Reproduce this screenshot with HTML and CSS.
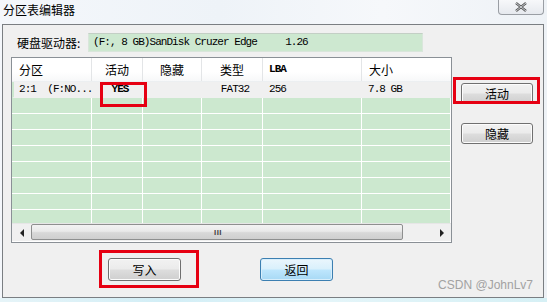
FILE: index.html
```html
<!DOCTYPE html>
<html lang="zh-CN">

<head>
    <meta charset="UTF-8">
    <title>分区表编辑器</title>
    <link rel="stylesheet" href="styles.css">
</head>

<body>

    <div class="titlebar">
        <span class="title">分区表编辑器</span>
        <div class="close">
            <svg width="14" height="10" viewBox="0 0 14 10">
                <path d="M2 1 L12 9 M12 1 L2 9" stroke="#555" stroke-width="2.4" fill="none" />
                <path d="M2 1 L12 9 M12 1 L2 9" stroke="#e9edf2" stroke-width="0.8" fill="none" />
            </svg>
        </div>
    </div>

    <div class="window">
        <div class="drive-row">
            <span class="drive-label">硬盘驱动器:</span>
            <div class="drive-box">(F:, 8 GB)SanDisk Cruzer Edge     1.26</div>
        </div>

        <div class="main">
            <div class="grid">
                <div class="grid-head">
                    <div class="hcell">分区</div>
                    <div class="hcell center">活动</div>
                    <div class="hcell center">隐藏</div>
                    <div class="hcell center">类型</div>
                    <div class="hcell mono">LBA</div>
                    <div class="hcell">大小</div>
                </div>
                <div class="grid-body">
                    <div class="row sel">
                        <div class="cell mono first">2:1  (F:NO...</div>
                        <div class="cell mono center bold">YES</div>
                        <div class="cell"></div>
                        <div class="cell mono center">FAT32</div>
                        <div class="cell mono">256</div>
                        <div class="cell mono">7.8 GB</div>
                    </div>
                    <div class="row"><div class="cell"></div><div class="cell"></div><div class="cell"></div><div class="cell"></div><div class="cell"></div><div class="cell"></div></div>
                    <div class="row"><div class="cell"></div><div class="cell"></div><div class="cell"></div><div class="cell"></div><div class="cell"></div><div class="cell"></div></div>
                    <div class="row"><div class="cell"></div><div class="cell"></div><div class="cell"></div><div class="cell"></div><div class="cell"></div><div class="cell"></div></div>
                    <div class="row"><div class="cell"></div><div class="cell"></div><div class="cell"></div><div class="cell"></div><div class="cell"></div><div class="cell"></div></div>
                    <div class="row"><div class="cell"></div><div class="cell"></div><div class="cell"></div><div class="cell"></div><div class="cell"></div><div class="cell"></div></div>
                    <div class="row"><div class="cell"></div><div class="cell"></div><div class="cell"></div><div class="cell"></div><div class="cell"></div><div class="cell"></div></div>
                    <div class="row"><div class="cell"></div><div class="cell"></div><div class="cell"></div><div class="cell"></div><div class="cell"></div><div class="cell"></div></div>
                    <div class="row"><div class="cell"></div><div class="cell"></div><div class="cell"></div><div class="cell"></div><div class="cell"></div><div class="cell"></div></div>
                </div>
                <div class="hscroll">
                    <div class="arrow"><span class="tri left"></span></div>
                    <div class="thumb"><span class="grip">III</span></div>
                    <div class="track"></div>
                    <div class="arrow"><span class="tri right"></span></div>
                </div>
            </div>

            <div class="side">
                <button class="btn">活动</button>
                <button class="btn">隐藏</button>
            </div>
        </div>

        <div class="bottom">
            <button class="btn wide">写入</button>
            <button class="btn wide focus">返回</button>
        </div>

        <span class="watermark">CSDN @JohnLv7</span>
    </div>

    <div class="mark mark-yes"></div>
    <div class="mark mark-active"></div>
    <div class="mark mark-write"></div>

    <div class="glass"></div>

</body>

</html>
```

FILE: styles.css
```css
* {
    margin: 0;
    padding: 0;
    box-sizing: border-box;
}

body {
    width: 547px;
    height: 302px;
    overflow: hidden;
    position: relative;
    background: linear-gradient(90deg, #f4f7fb 0%, #eef3f8 40%, #f6f8fb 70%, #eef2f6 100%);
    font-family: "Noto Sans CJK SC", "Liberation Sans", sans-serif;
    font-size: 12px;
    color: #000;
}

.titlebar {
    height: 24px;
    display: flex;
    justify-content: space-between;
    align-items: flex-start;
}

.title {
    padding: 2px 0 0 3px;
    font-size: 12px;
    line-height: 16px;
}

.close {
    width: 46px;
    height: 15px;
    margin-right: 3px;
    border: 1px solid #9a9ea4;
    border-top: none;
    border-radius: 0 0 4px 4px;
    background: linear-gradient(#f7f8fa, #e6e9ee);
    display: flex;
    justify-content: center;
    align-items: center;
}

.window {
    position: relative;
    width: 542px;
    height: 274px;
    margin-left: 2px;
    border: 1px solid #7a7e82;
    background: #f0f0f0;
}

.drive-row {
    display: flex;
    align-items: center;
    margin-top: 8px;
    padding-left: 14px;
    height: 19px;
}

.drive-label {
    width: 71px;
    line-height: 19px;
}

.drive-box {
    width: 335px;
    height: 19px;
    border: 1px solid #d9e6db;
    border-top-color: #c3cfc5;
    background: #cde8d0;
    font-family: "Liberation Mono", monospace;
    font-size: 11px;
    letter-spacing: -0.95px;
    line-height: 17px;
    padding-left: 4px;
    white-space: pre;
}

.main {
    display: flex;
    margin-top: 5px;
    padding-left: 8px;
}

.grid {
    width: 441px;
    height: 186px;
    border: 1px solid #8a9096;
    background: #fff;
    display: flex;
    flex-direction: column;
}

.grid-head,
.row {
    display: grid;
    grid-template-columns: 80px 51px 59px 61px 99px 89px;
}

.grid-head {
    height: 24px;
    background: linear-gradient(#ffffff 60%, #f7f8f9);
    border-bottom: 1px solid #eceff1;
}

.hcell {
    border-right: 1px solid #e3e5e7;
    padding-left: 7px;
    line-height: 23px;
}

.hcell:last-child {
    border-right: none;
}

.center {
    text-align: center;
    padding-left: 0;
}

.mono {
    font-family: "Liberation Mono", monospace;
    font-size: 11px;
    letter-spacing: -0.95px;
}

.hcell.mono {
    padding-left: 6px;
    font-weight: bold;
}

.bold {
    font-weight: bold;
}

.grid-body {
    height: 141px;
    overflow: hidden;
    background: #cce8cf;
}

.row {
    height: 16px;
}

.cell {
    border-right: 1px solid #fff;
    border-bottom: 1px solid #fff;
    line-height: 15px;
    padding-left: 6px;
    white-space: pre;
}

.row.sel {
    background: #f0f0f0;
}

.row.sel .cell {
    border-color: #f0f0f0;
}

.row.sel .cell.first {
    border-left: 2px solid #cce8cf;
    padding-left: 5px;
}

.hscroll {
    height: 18px;
    display: flex;
    background: #f0f0f0;
    border-top: 1px solid #e6e6e6;
}

.arrow {
    width: 19px;
    display: flex;
    justify-content: center;
    align-items: center;
}

.tri {
    width: 0;
    height: 0;
    border-top: 4px solid transparent;
    border-bottom: 4px solid transparent;
}

.tri.left {
    border-right: 4px solid #222;
}

.tri.right {
    border-left: 4px solid #222;
}

.thumb {
    width: 372px;
    height: 16px;
    border: 1px solid #8e8f8f;
    border-radius: 2px;
    background: linear-gradient(#f3f3f3 0%, #e9e9e9 45%, #d8d8d8 55%, #cfcfcf 100%);
    display: flex;
    justify-content: center;
    align-items: center;
}

.grip {
    font-family: "Liberation Sans", sans-serif;
    font-size: 8px;
    font-weight: bold;
    letter-spacing: 0.5px;
    color: #444;
    padding-left: 2px;
}

.track {
    flex: 1;
}

.side {
    display: flex;
    flex-direction: column;
    gap: 19px;
    padding: 26px 0 0 9px;
}

.btn {
    width: 72px;
    height: 21px;
    border: 1px solid #707070;
    border-radius: 3px;
    background: linear-gradient(#f2f2f2 0%, #ebebeb 48%, #dddddd 52%, #cfcfcf 100%);
    font-family: "Noto Sans CJK SC", sans-serif;
    font-size: 12px;
    color: #000;
    box-shadow: inset 0 0 0 1px #fcfcfc;
}

.bottom {
    display: flex;
    gap: 79px;
    margin-top: 15px;
    padding-left: 105px;
}

.btn.wide {
    width: 73px;
    height: 23px;
}

.btn.focus {
    border-color: #3c7fb1;
    background: linear-gradient(#eaf6fd 0%, #d9f0fc 48%, #bee6fd 52%, #a7d9f5 100%);
    box-shadow: inset 0 0 0 1px #d8eefb;
}

.watermark {
    position: absolute;
    right: 10px;
    bottom: 5px;
    font-family: "Liberation Sans", sans-serif;
    font-size: 12px;
    color: #a2a2a2;
}

.mark {
    position: absolute;
    border: 3px solid #e60012;
}

.mark-yes {
    left: 100px;
    top: 82px;
    width: 47px;
    height: 25px;
}

.mark-active {
    left: 453px;
    top: 77px;
    width: 87px;
    height: 27px;
}

.mark-write {
    left: 99px;
    top: 250px;
    width: 100px;
    height: 38px;
}

.glass {
    height: 4px;
    background: linear-gradient(90deg, #e6f4f8, #d2eef6 30%, #e4f5f9 60%, #d6f0f5);
}
```
